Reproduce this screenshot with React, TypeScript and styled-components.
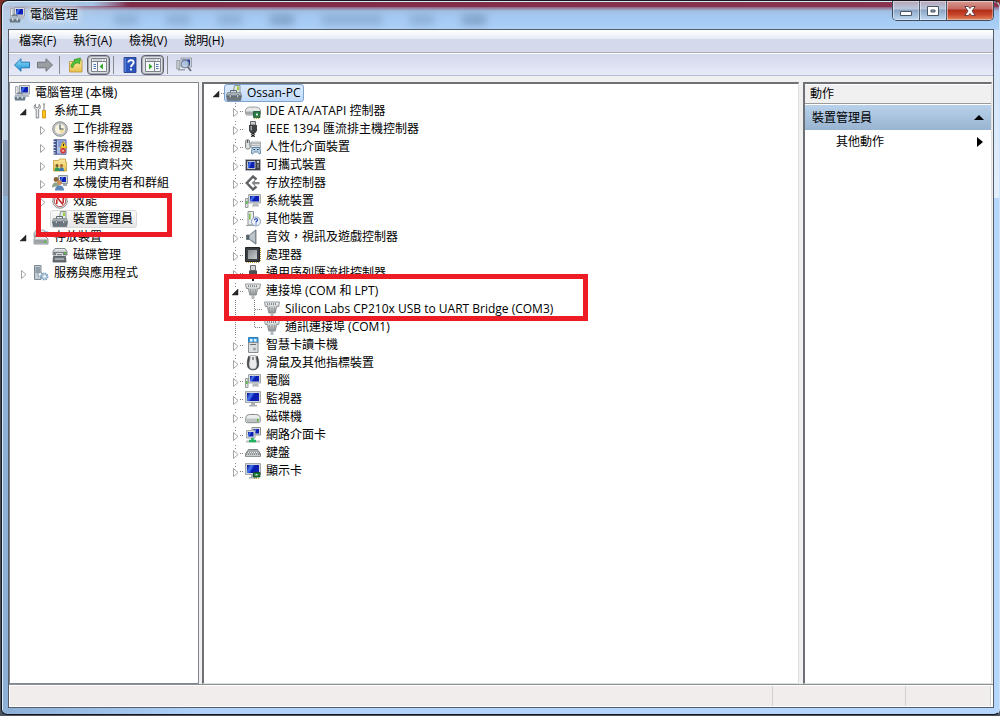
import React from "react";
import styled, { createGlobalStyle, css } from "styled-components";

const GlobalStyle = createGlobalStyle`
  * { box-sizing: border-box; }
  body {
    margin: 0;
    background: #3b3f4a;
    color: #000;
    font-family: "Open Sans", "Noto Sans CJK TC", sans-serif;
    font-size: 12px;
    line-height: 18px;
  }
  button { font: inherit; color: inherit; padding: 0; border: 0; background: none; }
  ul { list-style: none; margin: 0; padding: 0; }
  h1, h2 { margin: 0; font-size: 12px; font-weight: 400; }
`;

/* ---------- window frame ---------- */

const Desktop = styled.div`
  display: flex;
  min-height: 100vh;
  padding: 0 0 1px 1px;
  background: linear-gradient(180deg, #7d2c22 0, #8d4134 34px, #3b3f4a 50px, #4c5462 100%);
`;

const Window = styled.div`
  flex: 1;
  display: flex;
  flex-direction: column;
  min-width: 0;
  padding: 0 5px 6px 6px;
  border: 1px solid #16181d;
  border-right-color: #cfe4fb;
  border-radius: 7px 7px 6px 6px;
  box-shadow: inset 1px 1px 0 #dcebf8;
  background:
    linear-gradient(90deg, rgba(188, 208, 230, 0.9) 0, rgba(188, 208, 230, 0) 130px) top / 100% 29px no-repeat,
    linear-gradient(90deg, rgba(126, 43, 71, 0) 90px, #7e2b47 125px, #8b3550 100%) 0 1px / 100% 5px no-repeat,
    linear-gradient(180deg, #8b4a68 0, #a3bfe2 5px, #a3c9f3 11px, #b0d3f9 28px) 0 5px / 100% 24px no-repeat,
    linear-gradient(90deg, #c4d6e8, #c4d6e8) 0 29px / 7px 110px no-repeat,
    linear-gradient(90deg, #8fa1bb, #8fa1bb) 0 139px / 7px 56px no-repeat,
    linear-gradient(180deg, #cfe2f8, #e3effc) 100% 29px / 7px 168px no-repeat,
    linear-gradient(90deg, #8db0d6 0, #8db0d6 8px, #b0d2fa 200px, #b5d7fd 100%);
`;

const TitleBar = styled.header`
  display: flex;
  height: 28px;
  padding-left: 1px;
`;

const TitleLabel = styled.div`
  display: flex;
  align-items: center;
  gap: 5px;
  text-shadow: 0 0 6px #fff, 0 0 8px #fff;
`;

const Ghosts = styled.div`
  flex: 1;
  display: flex;
  align-items: center;
  gap: 28px;
  padding: 10px 0 0 36px;
  overflow: hidden;
`;

const Ghost = styled.span<{ $wide?: boolean; $faint?: boolean }>`
  width: ${(p) => (p.$wide ? 60 : 24)}px;
  height: 10px;
  flex: none;
  background: #5b7d9e;
  filter: blur(4px);
  opacity: ${(p) => (p.$faint ? 0.35 : 0.55)};
`;

const WindowButtons = styled.div`
  display: flex;
  height: 20px;
  border: 1px solid #3f4c5f;
  border-top: 0;
  border-radius: 0 0 5px 5px;
  overflow: hidden;
`;

const WindowButton = styled.button<{ $close?: boolean }>`
  display: flex;
  align-items: center;
  justify-content: center;
  width: ${(p) => (p.$close ? 46 : 27)}px;
  border-right: ${(p) => (p.$close ? "0" : "1px solid #4d5b70")};
  box-shadow: inset 1px 1px 0 rgba(255, 255, 255, 0.45), inset -1px -1px 0 rgba(255, 255, 255, 0.35);
  background: ${(p) =>
    p.$close
      ? "linear-gradient(180deg, #d69a94 0, #c6695d 8px, #b02d17 9px, #c9482c 14px, #e08a63 100%)"
      : "linear-gradient(180deg, #b9a3b8 0, #b9c9dd 8px, #8ba3c0 9px, #a3bfdd 14px, #c1d9f2 100%)"};
`;

const Client = styled.div`
  flex: 1;
  display: flex;
  flex-direction: column;
  min-height: 0;
  border: 1px solid #535c68;
  background: #f0f0f0;
`;

/* ---------- menu and toolbar ---------- */

const MenuBar = styled.nav`
  display: flex;
  gap: 17px;
  height: 23px;
  padding: 2px 10px;
  border-bottom: 1px solid #aaacb2;
  background: linear-gradient(180deg, #fff 0, #e6ebf4 9px, #d4d9ec 9px);
`;

const MenuButton = styled.button`
  white-space: nowrap;
  line-height: 18px;
`;

const ToolBar = styled.div`
  display: flex;
  align-items: center;
  height: 23px;
  padding-left: 1px;
  border-top: 1px solid #fff;
  border-bottom: 1px solid #b4bad2;
  background: linear-gradient(180deg, #d3d8ec, #e6eaf8);
`;

const ToolButton = styled.button<{ $pressed?: boolean }>`
  display: flex;
  align-items: center;
  justify-content: center;
  width: 23px;
  height: 20px;
  ${(p) =>
    p.$pressed &&
    css`
      border: 1px solid #5d6068;
      border-radius: 4px;
      box-shadow: inset 0 0 0 1px #a9acb5;
      background: #dcdee4;
    `}
`;

const ToolSeparator = styled.span`
  width: 1px;
  height: 18px;
  margin: 0 4px 0 3px;
  background: #85888f;
`;

/* ---------- panes ---------- */

const Panes = styled.main`
  flex: 1;
  display: grid;
  grid-template-columns: 190px minmax(0, 1fr) 189px;
  gap: 4px;
  padding: 6px 1px 0 0;
`;

const Pane = styled.section<{ $flat?: boolean }>`
  position: relative;
  background: #fff;
  ${(p) =>
    p.$flat
      ? css`
          border: 1px solid #828790;
          padding: 1px 0 0 2px;
        `
      : css`
          border: solid;
          border-width: 2px 1px 1px 2px;
          border-color: #6d7075 #e0e0e0 #e0e0e0 #6d7075;
        `}
`;

const DevicePane = styled(Pane)`
  margin-left: -1px;
  padding-left: 3px;
`;

const Row = styled.div<{ $depth: number }>`
  display: flex;
  height: 18px;
  padding-left: ${(p) => p.$depth * 19}px;
`;

const Toggle = styled.button`
  display: block;
  flex: none;
  width: 17px;
  height: 18px;
`;

const Guide = styled.span`
  flex: none;
  width: 17px;
  height: 18px;
`;

const Label = styled.span<{ $state?: "active" | "inactive" }>`
  display: flex;
  align-items: center;
  gap: 5px;
  padding: 0 3px 0 1px;
  border: 1px solid transparent;
  border-radius: 3px;
  white-space: nowrap;
  line-height: 16px;
  ${(p) =>
    p.$state === "active" &&
    css`
      border-color: #7da2ce;
      background: linear-gradient(180deg, #dcebfc, #c1dbfc);
    `}
  ${(p) =>
    p.$state === "inactive" &&
    css`
      border-color: #d9d9d9;
      background: linear-gradient(180deg, #fafafa, #e6e6e6);
    `}
`;

/* red annotation frame laid over a tree */
const Marker = styled.div<{ $x: number; $y: number; $w: number; $h: number }>`
  position: absolute;
  left: ${(p) => p.$x}px;
  top: ${(p) => p.$y}px;
  width: ${(p) => p.$w}px;
  height: ${(p) => p.$h}px;
  border: 5px solid #ed1c24;
  pointer-events: none;
`;

const ActionsTitle = styled.h2`
  height: 20px;
  padding-left: 5px;
  border-top: 1px solid #fff;
  border-bottom: 1px solid #9a9a9a;
  background: #f0f0f0;
`;

const ActionGroup = styled.button`
  display: flex;
  align-items: center;
  justify-content: space-between;
  width: 100%;
  height: 25px;
  margin-top: 1px;
  padding: 0 7px;
  background: linear-gradient(180deg, #b9d1ea, #99b4d1);
`;

const ActionItem = styled(ActionGroup)`
  height: 22px;
  padding: 0 8px 0 31px;
  background: none;
`;

const StatusBar = styled.footer`
  display: flex;
  height: 23px;
  padding: 1px 2px 1px 1px;
  border-top: 1px solid #8f9294;
  background: #fff;
`;

const StatusCell = styled.span<{ $w?: number }>`
  flex: ${(p) => (p.$w ? `0 0 ${p.$w}px` : "1")};
  border-right: 1px solid #d3d1d0;
  background: #f0edec;
`;

/* ---------- icons ---------- */

const IconBox = styled.svg`
  flex: none;
  width: 16px;
  height: 16px;
`;

const Defs = styled.svg`
  position: absolute;
  width: 0;
  height: 0;
`;

const Gradients = () => (
  <Defs aria-hidden="true">
    <defs>
      <linearGradient id="screen" x1="0" y1="0.2" x2="1" y2="0.6">
        <stop offset="0" stopColor="#0a1ba0" />
        <stop offset="0.3" stopColor="#4a78ea" />
        <stop offset="0.45" stopColor="#1b3fd6" />
        <stop offset="0.55" stopColor="#0a1cae" />
        <stop offset="1" stopColor="#0c22b8" />
      </linearGradient>
      <linearGradient id="metal" x1="0" y1="0" x2="0" y2="1">
        <stop offset="0" stopColor="#f4f6f6" />
        <stop offset="1" stopColor="#94999b" />
      </linearGradient>
      <linearGradient id="chip" x1="0" y1="0" x2="1" y2="1">
        <stop offset="0" stopColor="#85898b" />
        <stop offset="1" stopColor="#c9cccd" />
      </linearGradient>
      <linearGradient id="folder" x1="0" y1="0" x2="0" y2="1">
        <stop offset="0" stopColor="#fbe9a2" />
        <stop offset="1" stopColor="#e9c24f" />
      </linearGradient>
      <linearGradient id="blue" x1="0" y1="0" x2="0" y2="1">
        <stop offset="0" stopColor="#8fe0fb" />
        <stop offset="1" stopColor="#1c8fd6" />
      </linearGradient>
    </defs>
  </Defs>
);

const Monitor = () => (
  <>
    <path d="M.5.5h15v11H.5z" fill="#d3d6d8" stroke="#a4a9ac" />
    <path d="M2 2h12v8H2z" fill="url(#screen)" />
    <path d="M6 12h4v2h2v1.500H4V14h2z" fill="#a9aeb1" />
  </>
);

const icons: Record<string, React.ReactNode> = {
  management: (
    <>
      <path d="M5.500.5h10v8.500h-10z" fill="#d8dcdf" stroke="#9aa1a8" />
      <path d="M7 2h7v5.500H7z" fill="url(#screen)" />
      <path d="M10.500 9.500h4l1 2.500h-5z" fill="#b7bcc0" />
      <path d="M1.500 1.500h2.500v7H1.500z" fill="#e7eaec" stroke="#a4abb0" />
      <path d="M4 9.500V8h4v1.500" fill="none" stroke="#55606a" />
      <path d="M1 9.500h10l.5 2.500H.5z" fill="#a9b6c1" />
      <path d="M.5 12h11l-.5 3.500H1z" fill="#687885" />
      <path d="M3 11.500h1.500v2H3zM7.500 11.500H9v2H7.500z" fill="#e8ecef" />
    </>
  ),
  device: (
    <>
      <path d="M7.500 6.500l1-6h5.500v7" fill="#e3e7e6" stroke="#8d9496" />
      <path d="M11 1.500h2v3.500h-2z" fill="#9ccf3f" />
      <path d="M4.500 8.500v-3h6v3" fill="none" stroke="#5c666d" />
      <path d="M1.500 7.500h13l1.300 3H.2z" fill="#a7b1b8" stroke="#6d777e" strokeWidth=".6" />
      <path d="M.5 11h15l-.8 4.500H1.300z" fill="#6b767e" stroke="#4d575e" strokeWidth=".5" />
      <path d="M3.500 9.500h1.500v3H3.500zM11 9.500h1.500v3H11z" fill="#dfe4e6" stroke="#5a646b" strokeWidth=".5" />
    </>
  ),
  tools: (
    <>
      <path d="M3.200 6.500C.5 5.500.8 2.500 2.500 1.200V4l1.700.8L6 4V1.200C7.800 2.500 8 5.500 5.700 6.500V15H3.200z" fill="#e4e6e8" stroke="#6f7478" strokeWidth=".8" />
      <path d="M11 1v6M9.800 1h2.400" stroke="#8d9296" strokeWidth="1.200" />
      <path d="M9.500 7.500h3v7.500h-3z" fill="#ffc61a" stroke="#c78a00" strokeWidth=".8" />
    </>
  ),
  clock: (
    <>
      <circle cx="8" cy="8" r="7.300" fill="#c9cdd0" stroke="#6d7377" strokeWidth=".8" />
      <circle cx="8" cy="8" r="5.600" fill="#f8f4dd" stroke="#a2a6a8" strokeWidth=".7" />
      <path d="M8 8h4.500A4.500 4.500 0 0 1 8 12.500z" fill="#f3dba0" />
      <path d="M8 3.500V8h3.500" fill="none" stroke="#3d4d66" strokeWidth="1.100" />
    </>
  ),
  events: (
    <>
      <path d="M2.500.8h11.500v14.400H2.500z" fill="#aebfe6" stroke="#4a5f9e" />
      <path d="M1.500.5H5v15H1.500z" fill="#4b5b8d" />
      <path d="M1 2.500h2.500M1 5.500h2.500M1 8.500h2.500M1 11.500h2.500M1 14h2.500" stroke="#dfe5f4" />
      <path d="M6.500 3h5M6.500 5h2.500M6.500 7h2" stroke="#536fb8" />
      <path d="M11.500 2.500l3.500 6.500H8z" fill="#ffd42e" stroke="#b88700" strokeWidth=".6" />
      <path d="M11.500 4.800v2.400" stroke="#222" />
      <circle cx="11" cy="11.700" r="2.700" fill="#d8302a" />
      <path d="M10 10.700l2 2m0-2l-2 2" stroke="#fff" strokeWidth=".8" />
    </>
  ),
  shared: (
    <>
      <path d="M1.500 3.500h5l1-1.500h6v3h1v9h-13z" fill="url(#folder)" stroke="#c39a33" strokeWidth=".8" />
      <circle cx="5" cy="8.500" r="1.500" fill="#7a5230" />
      <circle cx="9.500" cy="8.500" r="1.500" fill="#a2672f" />
      <path d="M2.500 14c0-3 1.200-3.800 2.500-3.800s2.500.8 2.500 3.800z" fill="#2f9b56" />
      <path d="M7 14c0-3 1.200-3.800 2.500-3.800s2.500.8 2.500 3.800z" fill="#3877b5" />
    </>
  ),
  users: (
    <>
      <path d="M6.500.5h9v8h-9z" fill="#d5d9dc" stroke="#8f989f" />
      <path d="M8 2h6v5H8z" fill="url(#screen)" />
      <path d="M11 9h4v2h-4z" fill="#9fa6ab" />
      <circle cx="4" cy="4.500" r="2.400" fill="#8c6239" />
      <path d="M0 12.500c0-4 2-5 4-5s3 1 3.500 3z" fill="#8fa58a" />
      <circle cx="7.500" cy="7.500" r="2.500" fill="#c69064" />
      <path d="M3 15.500c0-4 2.500-5 4.500-5s4.500 1 4.500 5z" fill="#5b86b7" />
    </>
  ),
  perf: (
    <>
      <circle cx="8" cy="8" r="7.300" fill="#e1e3e4" stroke="#777c80" strokeWidth=".8" />
      <circle cx="8" cy="8" r="5.600" fill="#fff" stroke="#a33" strokeWidth=".8" />
      <path d="M4.800 11V6.500M5 4.500l6 7M11.200 10V5" stroke="#c11d1d" strokeWidth="1.500" />
    </>
  ),
  storage: (
    <>
      <path d="M1 4l2-3h8l2 3v4H1z" fill="url(#metal)" stroke="#8c9295" strokeWidth=".7" />
      <path d="M1 10l2-3h9l3 3v5H1z" fill="#e7eaeb" stroke="#777d81" strokeWidth=".8" />
      <path d="M1.500 10.500h13v4h-13z" fill="#9ba1a4" />
      <path d="M11 12h2.500v1.500H11z" fill="#4fc32e" />
      <path d="M11 2.500h4v4h-4z" fill="#5aa4cf" />
    </>
  ),
  diskmgmt: (
    <>
      <path d="M1 4.500l2-3h10l2 3V8H1z" fill="url(#metal)" stroke="#676d71" strokeWidth=".8" />
      <path d="M1.500 5h13v3h-13z" fill="#7b8286" />
      <path d="M12 5.500h2V7h-2z" fill="#4fc32e" />
      <path d="M1.500 9.500h12l.5 5.500H1z" fill="#6b7277" stroke="#484f54" strokeWidth=".8" />
      <path d="M4.500 9V6.500h6V9M3 12h9" fill="none" stroke="#d9dddf" />
    </>
  ),
  services: (
    <>
      <path d="M1.500.5H8v14H1.500z" fill="#c3ccd3" stroke="#7d8b96" />
      <path d="M2.500 3h4.500M2.500 5h4.500M2.500 7h4.500" stroke="#5e7180" />
      <circle cx="7" cy="9.500" r="2" fill="#eef2f5" stroke="#7c93a8" strokeWidth="1.200" strokeDasharray="1.200 .7" />
      <circle cx="11.500" cy="11.500" r="3" fill="#c8dcec" stroke="#7b9ebd" strokeWidth="2" strokeDasharray="1.500 .8" />
      <circle cx="11.500" cy="11.500" r="1" fill="#fff" />
    </>
  ),
  ide: (
    <>
      <path d="M.5 8c0-2.500 2-4 5-4h5c3 0 5 1.500 5 4v2.500c0 1-1 1.500-2 1.500H2.500c-1.200 0-2-.5-2-1.500z" fill="#e8eaea" stroke="#7e8486" strokeWidth=".8" />
      <path d="M1 8.500h14v3H1z" fill="#a3a8aa" />
      <path d="M8.500 8.500h6.500v6H8.500z" fill="#2b7a45" stroke="#0e4a22" strokeWidth=".7" />
      <path d="M11 10.500h2v2h-2z" fill="#d6e8d9" />
      <path d="M9 15.500h6" stroke="#d8a520" strokeDasharray="1 1" />
    </>
  ),
  plug: (
    <>
      <path d="M5.500.5h5v3.500h-5z" fill="#c9ccce" stroke="#55595c" strokeWidth=".9" />
      <path d="M4 4h8v5.500L10.500 12h-5L4 9.500z" fill="#3e4245" />
      <path d="M5.500 5H7v4.500H5.500z" fill="#9ca2a6" />
      <path d="M6.500 12h3v1.500h-3z" fill="#222" />
      <path d="M6 13.500l4 2.500M10 13.500L6 16" stroke="#111" fill="none" />
    </>
  ),
  hid: (
    <>
      <path d="M.8 1.500c1-1 3-1 3.700 0l.7 7c0 2-4.700 2-4.700 0z" fill="#dfe2e3" stroke="#666b6e" strokeWidth=".9" />
      <path d="M2.700 1v3" stroke="#444" />
      <path d="M6 3h9.500v6H6z" fill="#dadddf" stroke="#868c90" strokeWidth=".7" />
      <path d="M6.500 4.500H15M6.500 6.500H15" stroke="#8d9498" strokeDasharray="1 1" />
      <path d="M7.500 8.500h7c1 2 1.500 6 .5 6.500s-2-2-2.500-2h-3c-.5 0-1.500 2.500-2.500 2s-.5-4.500.5-6.500z" fill="#b5d0e4" stroke="#4f7490" strokeWidth=".8" />
      <path d="M8.500 10.500h1.500M12 10.500h1.500" stroke="#234" />
    </>
  ),
  portable: (
    <>
      <path d="M.5 2.500h15v11H.5z" fill="#3c3f45" stroke="#b3b7b9" />
      <path d="M2.500 4.500h7.500v7H2.500z" fill="url(#screen)" stroke="#dfe2ea" strokeWidth=".8" />
      <circle cx="13" cy="5" r="1.200" fill="#d3d7d9" />
      <path d="M12 8h2M12 10h2" stroke="#aab0b4" />
    </>
  ),
  storagectl: (
    <>
      <path d="M11.500 4.500L8 1.500 1.800 8 8 14.500l3.500-3" fill="none" stroke="#5d6164" strokeWidth="2.400" />
      <path d="M6.500 8L10 4.800V7h4.500v2.200H10v2z" fill="#84898c" />
    </>
  ),
  computer: (
    <>
      <path d="M3.500 1.500h12V10h-12z" fill="#d0d4d6" stroke="#a4a9ac" />
      <path d="M5 3h9v5.500H5z" fill="url(#screen)" />
      <path d="M8 10.500h5l1 3H7z" fill="#b3b8bb" />
      <path d="M.5 5.500H3v9H.5z" fill="#dfe3e4" stroke="#858b8e" strokeWidth=".8" />
      <path d="M1 8h1.500v3H1z" fill="#55b83a" />
    </>
  ),
  other: (
    <>
      <path d="M3 .5h5.500v13.500H3z" fill="#e8ebec" stroke="#8b9194" />
      <path d="M1 14.500h8" stroke="#9aa0a3" />
      <path d="M4 2.500h1.500v6H4z" fill="#74c043" />
      <circle cx="11" cy="10.500" r="4.500" fill="#eef3fa" stroke="#7d93ad" strokeWidth=".9" />
      <path d="M9.500 9.300c0-2 3-2 3-.2 0 1.200-1.500 1.200-1.500 2.400M11 12.600v1" fill="none" stroke="#1c46b0" strokeWidth="1.200" />
    </>
  ),
  sound: (
    <>
      <path d="M1.500 6h3L11 .8v14.400L4.500 10.500h-3z" fill="#8e989f" stroke="#667078" strokeWidth=".8" />
      <path d="M5 6l5-3.500v11L5 10z" fill="#bcc4c9" />
      <path d="M1.500 6H4v4.500H1.500z" fill="#59636b" />
    </>
  ),
  cpu: (
    <>
      <path d="M1 15.500h14M15.500 1v14" stroke="#c79a3c" strokeDasharray="1 1" />
      <path d="M.5.500h14v14H.5z" fill="#3c3f42" stroke="#222527" />
      <path d="M3 3h9v9H3z" fill="url(#chip)" />
    </>
  ),
  usb: (
    <>
      <path d="M5.500.5h5v5h-5z" fill="#d3d6d7" stroke="#6d7174" />
      <path d="M4 5.500h8v6L10.500 13h-5L4 11.500z" fill="#4b4f52" />
      <path d="M7 13h2v3H7z" fill="#222" />
    </>
  ),
  port: (
    <>
      <path d="M.5 1h15l-.8 4.500h-2L11.200 12H4.800L3.300 5.500h-2z" fill="url(#metal)" stroke="#7c8285" strokeWidth=".8" />
      <path d="M3 3h10" stroke="#6d7275" strokeDasharray="1 1" strokeWidth="1.500" />
      <path d="M5.500 6v5M8 6v5M10.500 6v5" stroke="#8f9598" strokeWidth=".8" />
      <path d="M6.500 12h3v4h-3z" fill="#b4b8ba" />
    </>
  ),
  smartcard: (
    <>
      <path d="M3.500.5h9.500v6H3.500z" fill="#3d9be0" stroke="#2f7fbb" />
      <path d="M5 2h2.500v2.500H5zM9 2h2.500v2.500H9z" fill="#e3f1fa" />
      <path d="M3.500 5.500H13v10H3.500z" fill="#dcdfe0" stroke="#878d90" />
      <path d="M5 7.500h6" stroke="#6b7174" />
      <circle cx="9.500" cy="12" r="1.500" fill="#9aa0a3" />
    </>
  ),
  mouse: (
    <>
      <path d="M4 .8c-1.500 3-2 6-1.500 10 .5 5.500 10.500 5.500 11 0 .5-4 0-7-1.500-10L10.500 5h-5z" fill="#43474b" stroke="#2c2f32" strokeWidth=".6" />
      <path d="M5.500.5h5l.8 4.500c.8 3 1.200 5.500-.3 8-1 1.500-5 1.500-6 0-1.500-2.500-1.100-5-.3-8z" fill="#e9ebec" stroke="#84898c" strokeWidth=".6" />
      <path d="M8 2v3" stroke="#555" strokeWidth="1.200" />
    </>
  ),
  monitor: <Monitor />,
  disk: (
    <>
      <path d="M.8 9c0-2.500 2-3.500 4.500-3.500h5.400c2.500 0 4.500 1 4.500 3.500v3.200c0 1-.8 1.500-1.800 1.500H2.600c-1 0-1.800-.5-1.800-1.500z" fill="#eceeee" stroke="#777c7e" strokeWidth=".9" />
      <path d="M1.300 9.500h13.400V13H1.300z" fill="#bfc2c3" />
      <path d="M12 10h1.500v2.500H12z" fill="#41b82a" />
    </>
  ),
  network: (
    <>
      <path d="M7 .5h8.500V8H7z" fill="#d6dadc" stroke="#8d9396" />
      <path d="M8.500 2H14v4.500H8.500z" fill="url(#screen)" />
      <path d="M1.500 3.500H10V11H1.500z" fill="#d6dadc" stroke="#a4a9ac" />
      <path d="M3 5h5.500v4.500H3z" fill="url(#screen)" />
      <path d="M1 14.500h14" stroke="#b9bdbf" strokeWidth="2" />
      <path d="M7.500 11v2.500M4 14h7" stroke="#1eb25f" strokeWidth="2.500" />
    </>
  ),
  keyboard: (
    <>
      <path d="M3.500 4.500h9L15.500 9v2.500H.5V9z" fill="#8e9396" stroke="#6f7578" strokeWidth=".8" />
      <path d="M3.500 6h9.500M3 7.500h10.500M2 9h12" stroke="#f3f4f4" strokeDasharray="1 1" />
      <path d="M1 10.700h14" stroke="#d5d8d9" />
    </>
  ),
  display: (
    <>
      <Monitor />
      <path d="M8.500 9.500H15V14H8.500z" fill="#1f7a3c" stroke="#0d4620" strokeWidth=".8" />
      <path d="M10.500 11h2v1.500h-2z" fill="#cfe4d4" />
      <path d="M9 15.500h6" stroke="#d8a520" strokeDasharray="1 1" />
    </>
  ),
  back: <path d="M.5 8L7 1.700V5.200h8.500v5.600H7v3.500z" fill="url(#blue)" stroke="#1d6fae" strokeWidth=".9" />,
  forward: <path d="M15.500 8L9 1.700V5.200H.5v5.600H9v3.500z" fill="#9a9da1" stroke="#696c70" strokeWidth=".9" />,
  up: (
    <>
      <path d="M1.500 4.500h4l1-1.500h7.500v12H1.500z" fill="url(#folder)" stroke="#b88f2f" strokeWidth=".8" />
      <path d="M3 10c0-3.500 1.500-5 4-5.500L6 2.500 12.500 1l-1 6L10 5.700C7.500 6.200 5.500 7 5 10.500z" fill="#4fc13b" stroke="#258a1b" strokeWidth=".6" />
    </>
  ),
  paneLeft: (
    <>
      <path d="M.5 1.500h15v13H.5z" fill="#f6f7f9" stroke="#7d828c" />
      <path d="M1 4.500h14" stroke="#7d828c" />
      <path d="M2 3h9M12 3h2" stroke="#a7abb5" />
      <path d="M6.500 5v9" stroke="#7d828c" />
      <path d="M2.500 7.500h2.500M2.500 9.500h2.500M2.500 11.500h2.500" stroke="#4c76b5" />
      <path d="M12 6.500v6L8.500 9.500z" fill="#35a72a" />
    </>
  ),
  paneRight: (
    <>
      <path d="M.5 1.500h15v13H.5z" fill="#f6f7f9" stroke="#7d828c" />
      <path d="M1 4.500h14" stroke="#7d828c" />
      <path d="M2 3h9M12 3h2" stroke="#a7abb5" />
      <path d="M9.500 5v9" stroke="#7d828c" />
      <path d="M11 7.500h2.500M11 9.500h2.500M11 11.500h2.500" stroke="#4c76b5" />
      <path d="M4 6.500v6l3.500-3z" fill="#35a72a" />
    </>
  ),
  help: (
    <>
      <path d="M2 .5h12v15H2z" fill="#2b55bd" stroke="#1a3480" strokeWidth=".8" />
      <path d="M2.500 1h1.500v14H2.500z" fill="#5c80d6" />
      <path d="M6.300 5.500c0-3.300 5.400-3.300 5.400 0 0 2-2.700 2-2.700 4.500M9 11.500v2" fill="none" stroke="#fff" strokeWidth="1.800" />
    </>
  ),
  scan: (
    <>
      <path d="M5 1h10.500v9H5z" fill="#d2d6da" stroke="#8b9299" strokeWidth=".8" />
      <path d="M6.500 2.500H14v6H6.500z" fill="#2238a0" />
      <path d="M.8 3.500h2.500V12H.8z" fill="#cfd4d8" stroke="#868d93" strokeWidth=".8" />
      <path d="M2 12h7v1.500H2z" fill="#9aa1a7" />
      <circle cx="9" cy="7" r="3.700" fill="#c3d9ee" fillOpacity=".85" stroke="#7d8a97" strokeWidth="1.200" />
      <path d="M11.700 9.800l3.300 4.200" stroke="#6d7780" strokeWidth="2" />
    </>
  ),
};

const Icon = ({ name }: { name: string }) => (
  <IconBox viewBox="0 0 16 16" aria-hidden="true">
    {icons[name]}
  </IconBox>
);

const CollapsedArrow = () => <path d="M7.500 6.500v8l4.500-4z" fill="#fff" stroke="#a3a3a3" />;
const ExpandedArrow = () => <path d="M12 7v6H6z" fill="#262626" stroke="#262626" strokeWidth=".5" />;
const LineUp = () => <path d="M9.500 1v4" stroke="#8a8a8a" strokeDasharray="1 2" />;
const LineAcross = () => <path d="M14 9.500h3" stroke="#808080" strokeDasharray="1 1" />;

/* ---------- trees ---------- */

type Node = {
  text: string;
  icon: string;
  depth: number;
  toggle: "open" | "closed" | "none" | "leaf";
  state?: "active" | "inactive";
};

const consoleTree: Node[] = [
  { text: "電腦管理 (本機)", icon: "management", depth: 0, toggle: "none" },
  { text: "系統工具", icon: "tools", depth: 0, toggle: "open" },
  { text: "工作排程器", icon: "clock", depth: 1, toggle: "closed" },
  { text: "事件檢視器", icon: "events", depth: 1, toggle: "closed" },
  { text: "共用資料夾", icon: "shared", depth: 1, toggle: "closed" },
  { text: "本機使用者和群組", icon: "users", depth: 1, toggle: "closed" },
  { text: "效能", icon: "perf", depth: 1, toggle: "closed" },
  { text: "裝置管理員", icon: "device", depth: 1, toggle: "leaf", state: "inactive" },
  { text: "存放裝置", icon: "storage", depth: 0, toggle: "open" },
  { text: "磁碟管理", icon: "diskmgmt", depth: 1, toggle: "leaf" },
  { text: "服務與應用程式", icon: "services", depth: 0, toggle: "closed" },
];

const deviceTree: Node[] = [
  { text: "Ossan-PC", icon: "device", depth: 0, toggle: "open", state: "active" },
  { text: "IDE ATA/ATAPI 控制器", icon: "ide", depth: 1, toggle: "closed" },
  { text: "IEEE 1394 匯流排主機控制器", icon: "plug", depth: 1, toggle: "closed" },
  { text: "人性化介面裝置", icon: "hid", depth: 1, toggle: "closed" },
  { text: "可攜式裝置", icon: "portable", depth: 1, toggle: "closed" },
  { text: "存放控制器", icon: "storagectl", depth: 1, toggle: "closed" },
  { text: "系統裝置", icon: "computer", depth: 1, toggle: "closed" },
  { text: "其他裝置", icon: "other", depth: 1, toggle: "closed" },
  { text: "音效，視訊及遊戲控制器", icon: "sound", depth: 1, toggle: "closed" },
  { text: "處理器", icon: "cpu", depth: 1, toggle: "closed" },
  { text: "通用序列匯流排控制器", icon: "usb", depth: 1, toggle: "closed" },
  { text: "連接埠 (COM 和 LPT)", icon: "port", depth: 1, toggle: "open" },
  { text: "Silicon Labs CP210x USB to UART Bridge (COM3)", icon: "port", depth: 2, toggle: "leaf" },
  { text: "通訊連接埠 (COM1)", icon: "port", depth: 2, toggle: "leaf" },
  { text: "智慧卡讀卡機", icon: "smartcard", depth: 1, toggle: "closed" },
  { text: "滑鼠及其他指標裝置", icon: "mouse", depth: 1, toggle: "closed" },
  { text: "電腦", icon: "computer", depth: 1, toggle: "closed" },
  { text: "監視器", icon: "monitor", depth: 1, toggle: "closed" },
  { text: "磁碟機", icon: "disk", depth: 1, toggle: "closed" },
  { text: "網路介面卡", icon: "network", depth: 1, toggle: "closed" },
  { text: "鍵盤", icon: "keyboard", depth: 1, toggle: "closed" },
  { text: "顯示卡", icon: "display", depth: 1, toggle: "closed" },
];

const Tree = ({ nodes, label, lines }: { nodes: Node[]; label: string; lines?: boolean }) => (
  <ul role="tree" aria-label={label}>
    {nodes.map((node, i) => {
      const deep = lines && node.depth === 2;
      return (
        <li key={i} role="treeitem" aria-level={node.depth + 1} aria-selected={!!node.state}>
          <Row $depth={deep ? 1 : node.depth}>
            {deep && (
              <svg width="19" height="18" aria-hidden="true">
                <path d="M9.500 0v18" stroke="#808080" strokeDasharray="1 1" />
              </svg>
            )}
            {(node.toggle === "open" || node.toggle === "closed") && (
              <Toggle aria-label={node.text} aria-expanded={node.toggle === "open"}>
                <svg width="17" height="18" display="block" aria-hidden="true">
                  {lines && node.depth > 0 && <LineUp />}
                  {lines && <LineAcross />}
                  {node.toggle === "open" ? <ExpandedArrow /> : <CollapsedArrow />}
                </svg>
              </Toggle>
            )}
            {node.toggle === "leaf" && (
              <Guide>
                {lines && (
                  <svg width="17" height="18" display="block" aria-hidden="true">
                    <path
                      d={nodes[i + 1]?.depth === node.depth ? "M9.500 0v18M10 9.500h7" : "M9.500 0v10M10 9.500h7"}
                      fill="none"
                      stroke="#808080"
                      strokeDasharray="1 1"
                    />
                  </svg>
                )}
              </Guide>
            )}
            <Label $state={node.state}>
              <Icon name={node.icon} />
              {node.text}
            </Label>
          </Row>
        </li>
      );
    })}
  </ul>
);

const ConsoleTree = styled.div`
  & li:nth-child(n + 2) {
    padding-left: 2px;
  }
`;

/* ---------- page ---------- */

export default function App() {
  return (
    <Desktop>
      <GlobalStyle />
      <Gradients />
      <Window>
        <TitleBar>
          <TitleLabel>
            <Icon name="management" />
            <h1>電腦管理</h1>
          </TitleLabel>
          <Ghosts aria-hidden="true">
            <Ghost $faint />
            <Ghost $faint />
            <Ghost $faint />
            <Ghost />
            <Ghost $wide $faint />
            <Ghost $faint />
            <Ghost />
          </Ghosts>
          <WindowButtons>
            <WindowButton aria-label="最小化">
              <svg width="14" height="12" aria-hidden="true">
                <path d="M1.500 6.500h11v4h-11z" fill="#fff" stroke="#4a5566" />
              </svg>
            </WindowButton>
            <WindowButton aria-label="最大化">
              <svg width="12" height="10" aria-hidden="true">
                <path d="M.5.5h11v9H.5zM4 4v2h4V4z" fill="#fff" fillRule="evenodd" stroke="#4a5566" />
              </svg>
            </WindowButton>
            <WindowButton $close aria-label="關閉">
              <svg width="12" height="10" aria-hidden="true">
                <path d="M.8.5h3.500L6 2.500 7.700.5h3.500L8 5l3.200 4.500H7.700L6 7.500 4.300 9.500H.8L4 5z" fill="#fff" stroke="#5b3a3e" strokeWidth=".9" />
              </svg>
            </WindowButton>
          </WindowButtons>
        </TitleBar>

        <Client>
          <MenuBar aria-label="功能表">
            <MenuButton>檔案(F)</MenuButton>
            <MenuButton>執行(A)</MenuButton>
            <MenuButton>檢視(V)</MenuButton>
            <MenuButton>說明(H)</MenuButton>
          </MenuBar>
          <ToolBar role="toolbar">
            <ToolButton aria-label="上一頁"><Icon name="back" /></ToolButton>
            <ToolButton aria-label="下一頁"><Icon name="forward" /></ToolButton>
            <ToolSeparator />
            <ToolButton aria-label="上移一層"><Icon name="up" /></ToolButton>
            <ToolButton $pressed aria-label="顯示或隱藏主控台樹狀目錄"><Icon name="paneLeft" /></ToolButton>
            <ToolSeparator />
            <ToolButton aria-label="說明"><Icon name="help" /></ToolButton>
            <ToolButton $pressed aria-label="顯示或隱藏執行窗格"><Icon name="paneRight" /></ToolButton>
            <ToolSeparator />
            <ToolButton aria-label="掃描硬體變更"><Icon name="scan" /></ToolButton>
          </ToolBar>

          <Panes>
            <Pane $flat>
              <ConsoleTree>
                <Tree nodes={consoleTree} label="主控台樹狀目錄" />
              </ConsoleTree>
              <Marker $x={26} $y={110} $w={136} $h={44} />
            </Pane>
            <DevicePane>
              <Tree nodes={deviceTree} label="裝置" lines />
              <Marker $x={20} $y={190} $w={364} $h={47} />
            </DevicePane>
            <Pane>
              <ActionsTitle>動作</ActionsTitle>
              <ActionGroup aria-expanded="true">
                裝置管理員
                <svg width="10" height="5" aria-hidden="true"><path d="M0 5l5-5 5 5z" /></svg>
              </ActionGroup>
              <ActionItem>
                其他動作
                <svg width="6" height="10" aria-hidden="true"><path d="M0 0l6 5-6 5z" /></svg>
              </ActionItem>
            </Pane>
          </Panes>

          <StatusBar>
            <StatusCell />
            <StatusCell $w={133} />
            <StatusCell $w={85} />
          </StatusBar>
        </Client>
      </Window>
    </Desktop>
  );
}
